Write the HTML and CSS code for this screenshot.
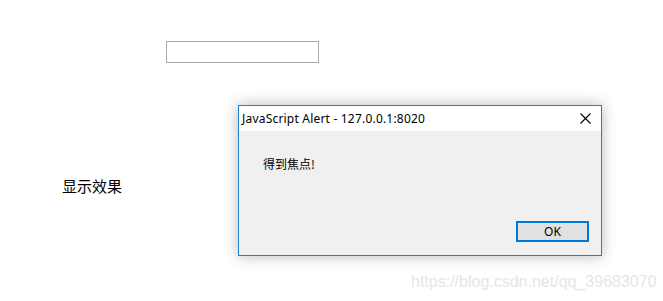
FILE: index.html
```html
<!DOCTYPE html>
<html lang="zh-CN">
<head>
    <meta charset="UTF-8">
    <meta name="viewport" content="width=device-width, initial-scale=1.0">
    <title>焦点事件</title>
    <link rel="stylesheet" href="styles.css">
</head>
<body>
    <div class="page">
        <div class="field">
            <input type="text" id="txt" class="text-input">
        </div>
        <div class="result">显示效果</div>
    </div>

    <div class="alert-box">
        <div class="alert-title">
            <span class="alert-caption">JavaScript Alert - 127.0.0.1:8020</span>
            <span class="alert-close">
                <svg width="11" height="11" viewBox="0 0 11 11">
                    <path d="M0.5 0.5 L10.5 10.5 M10.5 0.5 L0.5 10.5" stroke="#000" stroke-width="1.1" fill="none"/>
                </svg>
            </span>
        </div>
        <div class="alert-body">
            <div class="alert-message">得到焦点!</div>
            <div class="alert-actions">
                <button type="button" class="alert-ok">OK</button>
            </div>
        </div>
    </div>

    <div class="watermark">https://blog.csdn.net/qq_39683070</div>
</body>
</html>
```

FILE: styles.css
```css
body {
    margin: 0;
    font-family: "Noto Sans CJK SC", sans-serif;
    background: #fff;
    color: #000;
    width: 663px;
    height: 301px;
    overflow: hidden;
    position: relative;
}
.page {
    padding-top: 41px;
}
.field {
    margin-left: 166px;
    height: 22px;
}
.text-input {
    display: block;
    box-sizing: border-box;
    width: 153px;
    height: 22px;
    margin: 0;
    padding: 0 2px;
    border: 1px solid #a9a9a9;
    background: #fff;
    outline: none;
}
.result {
    margin-top: 112px;
    margin-left: 62px;
    font-size: 15px;
    line-height: 22px;
}
.alert-box {
    position: absolute;
    left: 238px;
    top: 105px;
    width: 364px;
    height: 151px;
    box-sizing: border-box;
    border: 1px solid #1a80d8;
    background: #f0f0f0;
    box-shadow: 0 0 14px rgba(0, 0, 0, 0.28);
    display: flex;
    flex-direction: column;
    font-family: "Noto Sans", "Noto Sans CJK SC", sans-serif;
    font-size: 12px;
}
.alert-title {
    height: 25px;
    background: #fff;
    display: flex;
    align-items: center;
    justify-content: space-between;
    padding: 0 10px 0 3px;
}
.alert-caption {
    line-height: 25px;
    letter-spacing: 0.2px;
}
.alert-close {
    display: flex;
    width: 11px;
    height: 11px;
}
.alert-body {
    flex: 1;
    display: flex;
    flex-direction: column;
    padding: 25px 12px 13px 24px;
}
.alert-message {
    flex: 1;
    font-family: "Noto Sans CJK SC", sans-serif;
    line-height: 16px;
}
.alert-actions {
    display: flex;
    justify-content: flex-end;
}
.alert-ok {
    box-sizing: border-box;
    width: 73px;
    height: 21px;
    margin: 0;
    padding: 0;
    border: 2px solid #0078d7;
    background: #e1e1e1;
    font-family: "Noto Sans", sans-serif;
    font-size: 12px;
    color: #000;
    line-height: 17px;
}
.watermark {
    position: absolute;
    left: 411px;
    top: 272px;
    font-family: "Liberation Sans", sans-serif;
    font-size: 16px;
    line-height: 20px;
    color: #e6e6e6;
}
```
